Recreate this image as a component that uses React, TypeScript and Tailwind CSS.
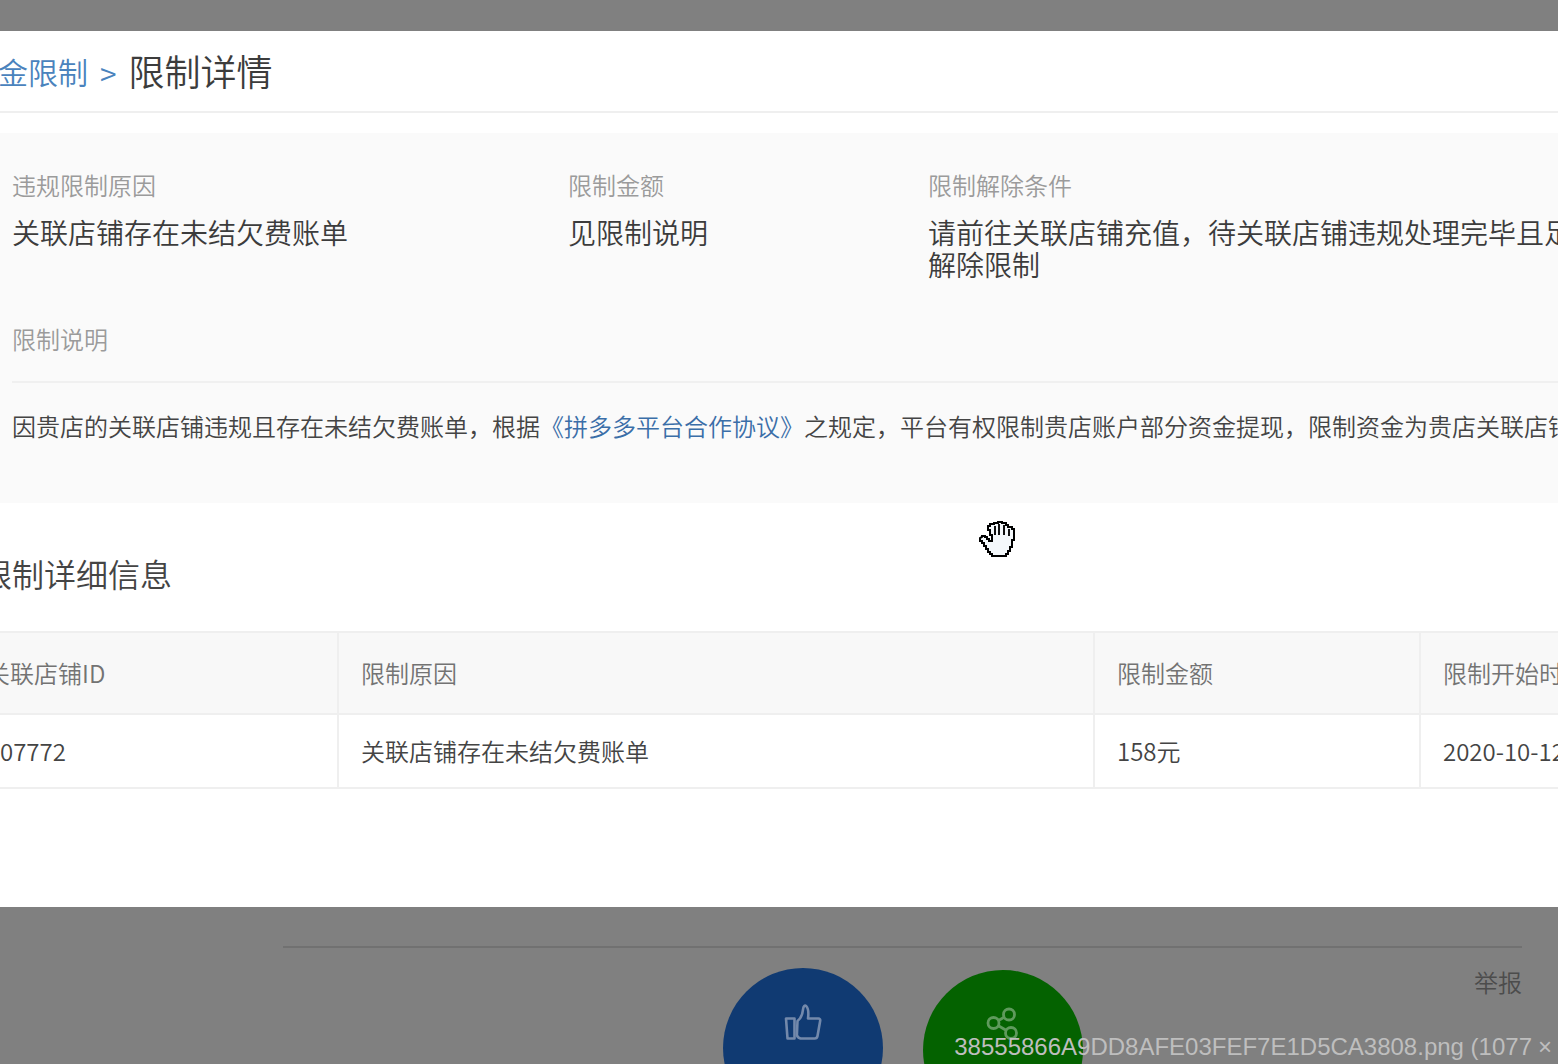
import React from "react";

const labelText = "text-2xl leading-8 text-[#9b9b9b]";
const valueText = "mt-[15px] text-[28px] leading-8 text-[#3c3c3c]";
const headCell =
  "h-[82px] border-b-2 border-[#efefef] p-0 text-left align-middle font-[350] text-[#737373]";
const bodyCell = "h-[72px] border-[#efefef] p-0 text-left align-middle text-[#444444]";

function ThumbIcon() {
  return (
    <svg className="-ml-0.5" width="40" height="40" viewBox="0 0 40 40" fill="none" stroke="#7389ab" strokeWidth="2.6" strokeLinejoin="round" aria-hidden="true">
      <path d="M4 15.500h8.500v20H5.500z" />
      <path d="M15.500 18c3.500-2.500 5-6 5.500-11.500.3-3.800 2-4.600 3.200-3.400 2.200 2.200 2.600 6.400 1.800 12.400h10.500c1.300 0 1.900 1 1.700 2.200l-2.700 15.300c-.3 1.700-1.300 2.500-2.800 2.500H18.500c-2.200-.8-3.300-1.600-3.600-3.500z" />
    </svg>
  );
}

function ShareIcon() {
  return (
    <svg width="36" height="36" viewBox="0 0 36 36" fill="none" stroke="#5f9a5c" strokeWidth="2.8" aria-hidden="true">
      <circle cx="8.500" cy="17" r="5.500" />
      <circle cx="24" cy="8.500" r="5.500" />
      <circle cx="26" cy="27" r="5.500" />
      <path d="M13.500 14.500l6-3.500M13 19.500l8.500 5" />
    </svg>
  );
}

function GrabHand() {
  return (
    <svg className="absolute left-[979px] top-[489px]" width="38" height="38" viewBox="0 0 38 38" aria-hidden="true">
      <path
        d="M1 18v3h2v2h2v3h2v3h2v3h2v2h2v2h14v-2h2v-3h2v-4h2v-7h2V9h-2V7h-4V5h-2V3h-4V2h-4v1h-4v1h-4v2h-2v4h2v5h2v6h-3v-2H8v-2H6v-1H3v1z"
        fill="#f4f8fb"
        stroke="#000000"
        strokeWidth="2"
      />
      <path d="M16 6v9M20 4v11M25 5v10M30 9v7" stroke="#111111" strokeWidth="2" fill="none" />
    </svg>
  );
}

export default function App() {
  return (
    <div className="relative flex h-screen flex-col overflow-hidden bg-[#808080] pt-[31px] font-['Noto_Sans_CJK_SC',sans-serif] font-[350] whitespace-nowrap">
      <main className="relative shrink-0 overflow-hidden bg-white pb-[118px]">
        <header className="flex h-[82px] items-center border-b-2 border-[#efefef]">
          <nav className="-ml-0.5 flex items-end text-[30px] leading-10 text-[#4a83bd]" aria-label="breadcrumb">
            <a href="#funds">金限制</a>
            <span className="ml-3 text-[30px] leading-9">&gt;</span>
          </nav>
          <h1 className="ml-3 pb-0.5 text-4xl leading-[48px] text-[#3c3c3c]">限制详情</h1>
        </header>

        <section className="mt-5 bg-[#fafafa] pt-9 pb-[61px] pl-3">
          <dl className="grid grid-cols-[556px_360px_1fr]">
            <div>
              <dt className={labelText}>违规限制原因</dt>
              <dd className={valueText}>关联店铺存在未结欠费账单</dd>
            </div>
            <div>
              <dt className={labelText}>限制金额</dt>
              <dd className={valueText}>见限制说明</dd>
            </div>
            <div className="min-w-0">
              <dt className={labelText}>限制解除条件</dt>
              <dd className={valueText}>
                请前往关联店铺充值，待关联店铺违规处理完毕且足
                <br />
                解除限制
              </dd>
            </div>
          </dl>
          <h2 className="mt-[43px] border-b-2 border-[#f0f0f0] pb-[26px] text-2xl leading-8 text-[#9b9b9b]">限制说明</h2>
          <p className="mt-[27px] text-2xl leading-8 text-[#444444]">
            因贵店的关联店铺违规且存在未结欠费账单，根据
            <a href="#agreement" className="text-[#3a6ea8]">《拼多多平台合作协议》</a>
            之规定，平台有权限制贵店账户部分资金提现，限制资金为贵店关联店铺
          </p>
        </section>

        <section className="mt-[50px]">
          <h2 className="-ml-5 text-[32px] leading-10 text-[#444444]">限制详细信息</h2>
          <table className="mt-[38px] w-full table-fixed border-separate border-spacing-0 border-y-2 border-[#efefef] text-2xl leading-8">
            <colgroup>
              <col className="w-[337px]" />
              <col className="w-[756px]" />
              <col className="w-[326px]" />
              <col />
            </colgroup>
            <thead className="bg-[#f8f8f8]">
              <tr>
                <th className={headCell}><div className="-ml-3.5">关联店铺ID</div></th>
                <th className={`${headCell} border-l-2`}><div className="pl-[22px]">限制原因</div></th>
                <th className={`${headCell} border-l-2`}><div className="pl-[22px]">限制金额</div></th>
                <th className={`${headCell} border-l-2`}><div className="pl-[22px]">限制开始时</div></th>
              </tr>
            </thead>
            <tbody>
              <tr>
                <td className={bodyCell}>07772</td>
                <td className={`${bodyCell} border-l-2`}><div className="pl-[22px]">关联店铺存在未结欠费账单</div></td>
                <td className={`${bodyCell} border-l-2`}><div className="pl-[22px]">158元</div></td>
                <td className={`${bodyCell} border-l-2`}><div className="pl-[22px]">2020-10-12</div></td>
              </tr>
            </tbody>
          </table>
        </section>
        <GrabHand />
      </main>

      <footer className="mt-[39px] mr-9 ml-[283px] grid shrink-0 grid-cols-[1fr_auto_1fr] border-t-2 border-[#717171] pt-5">
        <div />
        <div className="flex gap-10">
          <button type="button" aria-label="点赞" className="flex size-40 justify-center rounded-full bg-[#103a72] pt-[35px]">
            <ThumbIcon />
          </button>
          <button type="button" aria-label="分享" className="mt-0.5 flex size-40 justify-center rounded-full bg-[#046200] pt-9">
            <ShareIcon />
          </button>
        </div>
        <a href="#report" className="-mt-0.5 justify-self-end self-start text-2xl leading-8 text-[#4c4c4c]">举报</a>
      </footer>

      <div className="absolute right-1.5 bottom-0 flex items-center gap-1.5 font-['Liberation_Sans',sans-serif] text-2xl leading-[34px] font-normal text-[#bebebe]">
        <span>38555866A9DD8AFE03FEF7E1D5CA3808.png (1077</span>
        <button type="button">×</button>
      </div>
    </div>
  );
}
